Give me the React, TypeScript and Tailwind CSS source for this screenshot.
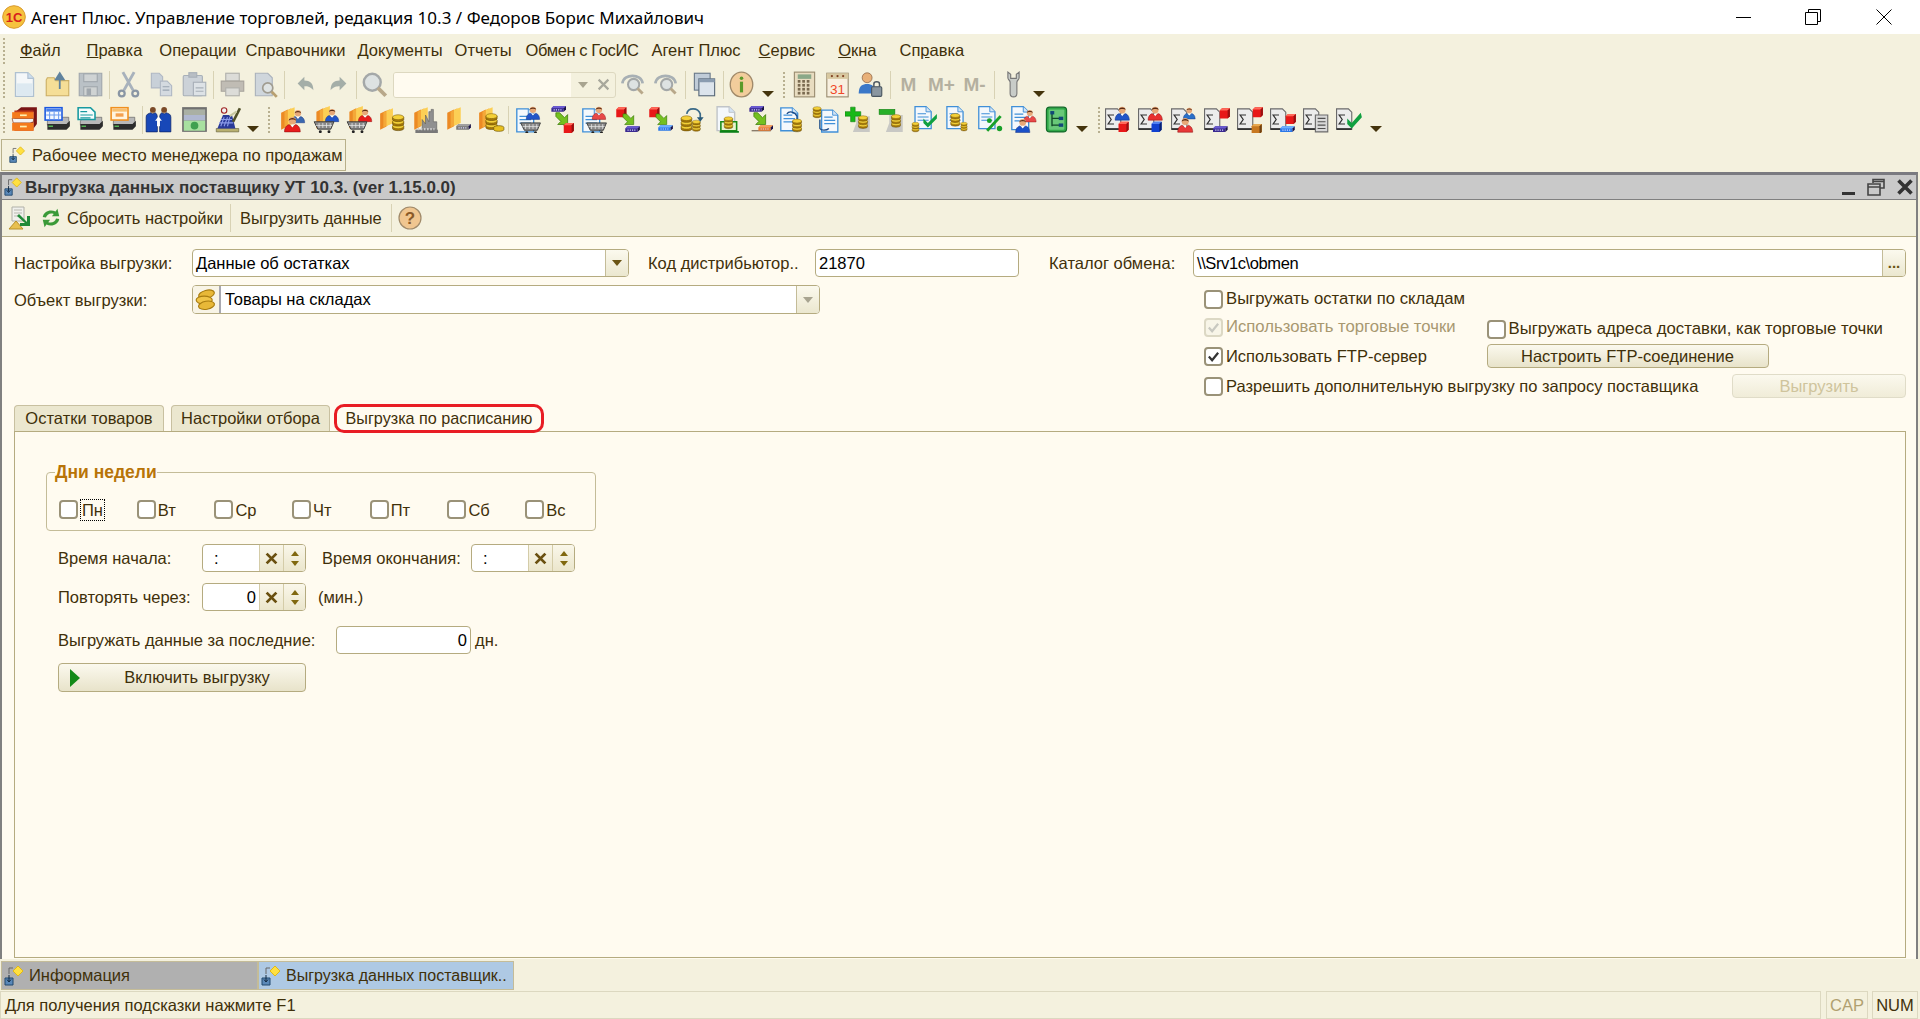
import React from "react";

type P = { x?: number; y?: number; s?: number };
const T = ({ x = 0, y = 0, s = 1, children }: P & { children: React.ReactNode }) => (
  <g transform={`translate(${x} ${y}) scale(${s})`}>{children}</g>
);

const Person = ({ x, y, s, c = "#2255c8", d = "#122f80" }: P & { c?: string; d?: string }) => (
  <T x={x} y={y} s={s}>
    <path d="M0 14 C0 9.5 2.5 8 4 7.5 L7 9.5 L10 7.5 C11.5 8 14 9.5 14 14 Z" fill={c} stroke={d} strokeWidth="0.5" />
    <path d="M5.5 8 L7 10 L8.5 8 Z" fill="#fff" />
    <circle cx="7" cy="4" r="3.3" fill="#e8a878" />
    <path d="M3.7 4 C3.7 0.8 10.3 0.8 10.3 4 C9 2.6 5 2.6 3.7 4 Z" fill="#5a2c14" />
  </T>
);
const Coins = ({ x, y, s }: P) => (
  <T x={x} y={y} s={s}>
    {[9, 5, 1].map((v) => (
      <g key={v}>
        <path d={`M0 ${v + 2} V${v + 4} C0 ${v + 6.5} 10 ${v + 6.5} 10 ${v + 4} V${v + 2} Z`} fill="#a87a08" stroke="#5a4204" strokeWidth="0.5" />
        <ellipse cx="5" cy={v + 2} rx="5" ry="2.2" fill="#f4d038" stroke="#7a5a08" strokeWidth="0.5" />
      </g>
    ))}
  </T>
);
const Stack = ({ x, y, s }: P) => (
  <T x={x} y={y} s={s}>
    <path d="M0 5 L6 2 V17 L0 20 Z" fill="#ec8a24" />
    <path d="M3 4 L9 1 V15 L3 18 Z" fill="#f4a838" />
    <path d="M6 2.5 L12 0 V14 L6 16.5 Z" fill="#fccf55" />
  </T>
);
const Cart = ({ x, y, s }: P) => (
  <T x={x} y={y} s={s}>
    <path d="M0 0 H16 L13.5 6 H3 Z" fill="#8a8a8a" stroke="#333" strokeWidth="0.7" />
    <path d="M4 1 V5 M7 1 V5 M10 1 V5 M13 1 V5 M1.5 3 H14.5" stroke="#e8e8e8" strokeWidth="0.6" />
    <circle cx="5" cy="8" r="1.2" fill="#222" />
    <circle cx="12" cy="8" r="1.2" fill="#222" />
  </T>
);
const Doc = ({ x, y, s, c = "#3f8fd8", lines = true }: P & { c?: string; lines?: boolean }) => (
  <T x={x} y={y} s={s}>
    <path d="M0.5 0.5 H9 L13 4.5 V17.5 H0.5 Z" fill="#f4f8fc" stroke={c} strokeWidth="1" />
    <path d="M9 0.5 V4.5 H13" fill="#d4e4f4" stroke={c} strokeWidth="0.7" />
    {lines && <path d="M2.5 6 H9 M2.5 8.5 H11 M2.5 11 H11" stroke={c} strokeWidth="0.9" />}
  </T>
);
const Cube = ({ x, y, s, c = "#e81818", l = "#ff6a5a", d = "#981010" }: P & { c?: string; l?: string; d?: string }) => (
  <T x={x} y={y} s={s}>
    <path d="M0 2 L2 0 H9 V7 L7 9 H0 Z" fill={c} />
    <path d="M0 2 L2 0 H9 L7 2 Z" fill={l} />
    <path d="M7 2 L9 0 V7 L7 9 Z" fill={d} />
  </T>
);
const Bar = ({ x, y, s, c = "#3a2a90", l = "#6a5ad0" }: P & { c?: string; l?: string }) => (
  <T x={x} y={y} s={s}>
    <path d="M0 2 L2 0 H13 L11 2 V5 H0 Z" fill={c} />
    <path d="M0 2 L2 0 H13 L11 2 Z" fill={l} />
    <path d="M11 2 L13 0 V3 L11 5 Z" fill="#181048" />
    <path d="M2 3.4 H9" stroke="#d8d8ff" strokeWidth="1" strokeDasharray="1 1" />
  </T>
);
const GreenArrow = ({ x, y, s }: P) => (
  <T x={x} y={y} s={s}>
    <path d="M0 0 H3 L7 4 L9.5 1.5 V9.5 H1.5 L4 7 L0 3 Z" fill="#74c020" stroke="#3a7a08" strokeWidth="0.6" />
  </T>
);
const Sigma = ({ x = 0, y = 0 }: P) => (
  <T x={x} y={y}>
    <path d="M0.5 2.5 H11 L14 5.5 V20.5 H0.5 Z" fill="#ececec" stroke="#6a6a6a" strokeWidth="1" />
    <path d="M8 8 H2.8 L5.5 12 L2.8 16 H8" fill="none" stroke="#303030" strokeWidth="1.1" />
    <path d="M0.5 20.5 H14" stroke="#2a2a2a" strokeWidth="1.5" />
  </T>
);
const Printer = ({ children }: { children?: React.ReactNode }) => (
  <>
    <path d="M3 13 L7 10 H22 V14 L20 17 H3 Z" fill="#b8b8b8" stroke="#505050" strokeWidth="0.5" />
    <path d="M3 16 H20 L23 13 V18 L20 21 H3 Z" fill="#2c2c2c" />
    <path d="M4 18 H8" stroke="#58c058" strokeWidth="1.2" />
    {children}
  </>
);

const I = ({ children }: { children: React.ReactNode }) => (
  <svg viewBox="0 0 24 24" className="h-[27px] w-[27px] shrink-0">{children}</svg>
);

const icons: Record<string, React.ReactNode> = {
  newDoc: <g><path d="M4 1.5 H15 L20 6.5 V22.5 H4 Z" fill="#f4f8fc" stroke="#a8bcd0" strokeWidth="1.2" /><path d="M15 1.5 V6.5 H20" fill="#c8dcf0" stroke="#a8bcd0" /><rect x="5" y="11" width="14" height="11" fill="#dbe9f4" /></g>,
  open: <g><path d="M2 8 L3 6 H9 L10.5 8.5 H22 V22 H2 Z" fill="#f6dd90" stroke="#c8a858" /><path d="M14 16 V5 M10.5 7.5 L14 2 L17.5 7.5 Z" fill="#507898" stroke="#507898" strokeWidth="1.6" /></g>,
  save: <g fill="#b4bcc4" stroke="#98a0a8"><path d="M2 2 H22 V22 H2 Z" /><rect x="6" y="2.5" width="12" height="7" fill="#cbd0d4" /><rect x="6" y="14" width="12" height="8" fill="#ccd0d2" /><rect x="9" y="16" width="3" height="5" fill="#98a0a8" /></g>,
  cut: <g fill="none" stroke="#a8b2bc" strokeWidth="2.6"><path d="M7 1 L16 17 M17 1 L8 17" /><circle cx="6" cy="20" r="2.6" strokeWidth="2" stroke="#8a96a4" /><circle cx="18" cy="20" r="2.6" strokeWidth="2" stroke="#8a96a4" /></g>,
  copy: <g fill="#c8d0d8" stroke="#b0b8c4"><path d="M3 2 H10 L13 5 V15 H3 Z" /><path d="M11 9 H17 L21 13 V22 H11 Z" fill="#d4dae0" /><path d="M13 14 H19 M13 17 H19" stroke="#98a4b0" /></g>,
  paste: <g fill="#ccd2d8" stroke="#a8b0b8"><rect x="2" y="4" width="17" height="18" rx="1" /><rect x="7" y="1.5" width="7" height="4" fill="#b8bec4" /><rect x="11" y="10" width="11" height="12" fill="#dde2e6" /><path d="M13 15 H20 M13 18 H20" /></g>,
  print: <g><rect x="6" y="2" width="12" height="7" fill="#dcdcd8" stroke="#b0b0ac" /><path d="M2 9 H22 V18 H2 Z" fill="#c0bcb4" stroke="#a8a49c" /><rect x="6" y="15" width="12" height="7" fill="#dcdcd8" stroke="#b0b0ac" /></g>,
  preview: <g><path d="M3 2 H14 L18 6 V22 H3 Z" fill="#cfd6dc" stroke="#aab2bc" /><circle cx="14" cy="15" r="4.5" fill="#dfe4e4" stroke="#a09c90" strokeWidth="1.5" /><path d="M17.5 18.5 L22 23" stroke="#b8a070" strokeWidth="2.5" /></g>,
  undo: <path d="M5 11 L11 5 V8.5 C16 8.5 19 11 19 17 C16.5 14 14 13.5 11 13.5 V17 Z" fill="#a4aea8" />,
  redo: <path d="M19 11 L13 5 V8.5 C8 8.5 5 11 5 17 C7.5 14 10 13.5 13 13.5 V17 Z" fill="#a4aea8" />,
  find: <g><circle cx="10" cy="10" r="7.5" fill="#dde2e2" stroke="#a4a8a8" strokeWidth="2.2" /><path d="M15 15 L22 22" stroke="#b8a88a" strokeWidth="3.4" /></g>,
  findPrev: <g><path d="M3 11 C4 2 20 2 21 11" fill="none" stroke="#a8b0b4" strokeWidth="2.4" /><circle cx="13" cy="12" r="5" fill="#dde2e2" stroke="#a4a8a8" strokeWidth="1.8" /><path d="M16.5 15.5 L21 20" stroke="#b8a88a" strokeWidth="2.6" /></g>,
  windows: <g><rect x="3" y="2" width="14" height="15" fill="#c0ccd8" stroke="#6a7a8a" /><rect x="7" y="7" width="14" height="15" fill="#dce4ec" stroke="#5a6a7a" /><rect x="7" y="7" width="14" height="3" fill="#8a9cb0" /></g>,
  info: <g><ellipse cx="12" cy="12" rx="10" ry="11" fill="#f2cd9c" stroke="#a08a6a" strokeWidth="1.2" /><circle cx="12" cy="6.5" r="1.6" fill="#5a9a28" /><rect x="10.6" y="9.5" width="2.8" height="9.5" fill="#5a9a28" /></g>,
  calc: <g><rect x="3" y="1" width="18" height="22" fill="#e8dcc0" stroke="#9a8c70" /><rect x="6" y="3" width="12" height="4" fill="#8aa888" />{[9, 12.5, 16, 19.5].flatMap((y) => [7, 11, 15].map((x) => <rect key={`${x}${y}`} x={x - 1} y={y - 1} width="2.4" height="2.4" fill="#7a6a50" />))}</g>,
  calendar: <g><rect x="2.5" y="2" width="19" height="21" fill="#f8f0e0" stroke="#9a8c70" /><rect x="2.5" y="2" width="19" height="5" fill="#d8c8a0" /><circle cx="7" cy="4.5" r="1" fill="#804020" /><circle cx="12" cy="4.5" r="1" fill="#804020" /><circle cx="17" cy="4.5" r="1" fill="#804020" /><text x="12" y="20" textAnchor="middle" fontSize="12" fontFamily="Liberation Sans" fill="#f04828">31</text></g>,
  userLock: <g><circle cx="9" cy="6" r="4.4" fill="#e8b078" stroke="#80583a" strokeWidth="0.6" /><path d="M1.5 20 C1.5 13 5 11.5 9 11.5 C13 11.5 16 13 16 20 Z" fill="#3a78c8" /><rect x="13" y="14" width="9" height="8.5" rx="1" fill="#8a96a0" stroke="#4a5660" /><path d="M15 14 V11.5 C15 9 20 9 20 11.5 V14" fill="none" stroke="#4a5660" strokeWidth="1.3" /></g>,
  wrench: <g fill="#c8ccc8" stroke="#777"><path d="M7 1 V6 C7 8 9 8 9 10 V20 C9 24 15 24 15 20 V10 C15 8 17 8 17 6 V1 L14.5 3 V6.5 H9.5 V3 Z" /></g>,
  cabinet: <g><path d="M4 5 L9 1 H23 V16 L20 20 V5 Z" fill="#7a1414" /><rect x="3" y="4" width="17" height="18" fill="#c03a1a" /><path d="M1 11 H20 V14 L17 15 H2 Z" fill="#f4f4f4" stroke="#803010" strokeWidth="0.6" /><rect x="1" y="5.5" width="19" height="5.5" fill="#f47a1c" /><rect x="1" y="15" width="19" height="7" fill="#f47a1c" /><rect x="8" y="7.5" width="6" height="1.5" fill="#fff0b0" /><rect x="8" y="17.5" width="6" height="1.5" fill="#fff0b0" /></g>,
  printerTable: <Printer><rect x="1" y="1.5" width="15" height="11" fill="#f4f8ff" stroke="#1a58e0" strokeWidth="1.4" /><rect x="2" y="2.5" width="13" height="2.5" fill="#4a80e8" /><path d="M5 5 V12 M9 5 V12 M13 5 V12 M2 8 H15" stroke="#6a9af0" strokeWidth="0.9" /></Printer>,
  printerDoc: <Printer><path d="M1 1.5 H12 L16 5.5 V12 H1 Z" fill="#f4fcfc" stroke="#189aa0" strokeWidth="1.4" /><path d="M3 5 H9 M3 8 H14 M3 10.5 H12" stroke="#189aa0" strokeWidth="1" /></Printer>,
  printerOrange: <Printer><rect x="1" y="1.5" width="15" height="11" fill="#fff4e0" stroke="#f09020" strokeWidth="1.4" /><rect x="2" y="2.5" width="13" height="2.5" fill="#f8c070" /><rect x="5" y="6.5" width="7" height="3" fill="#f4a050" /></Printer>,
  people: <g><path d="M1 23 V10 C1 7 3 7 5 6 L7 7 L9 6 C11 7 11 9 11 12 V23 Z" fill="#1848b8" stroke="#0a2060" strokeWidth="0.6" /><path d="M13 23 V12 C13 9 13 7 15 6 L17 7 L19 6 C21 7 23 7 23 10 V23 Z" fill="#1848b8" stroke="#0a2060" strokeWidth="0.6" /><circle cx="7" cy="3.5" r="2.6" fill="#7a4a28" /><circle cx="17" cy="3.5" r="2.6" fill="#7a4a28" /><path d="M9 13 L12 9 L15 13 Z" fill="#fff" /><rect x="10.7" y="12" width="2.6" height="6" fill="#fff" /></g>,
  money: <g><rect x="1" y="1" width="22" height="22" fill="#707070" /><rect x="2.5" y="3" width="19" height="5" fill="#aab0a4" /><rect x="2.5" y="8" width="19" height="5" fill="#b0b8d0" /><rect x="2.5" y="13" width="19" height="9" fill="#a8e0a0" /><circle cx="12" cy="17.5" r="3.4" fill="#40a050" /></g>,
  register: <g><path d="M2 20 H22 V23 H2 Z" fill="#b8b070" stroke="#5a5430" strokeWidth="0.5" /><path d="M3 20 L8 8 H16 L19 20 Z" fill="#2a3a98" /><path d="M6 18 L9 10 M9 18 L12 10 M12 18 L14 10 M4.5 15 H17 M6 12 H16" stroke="#8a9ae8" strokeWidth="1" /><circle cx="9" cy="4" r="2.4" fill="#f4f4f4" stroke="#a02828" /><path d="M17 14 L23 2" stroke="#505028" strokeWidth="2.4" /><path d="M14 9 L20 5" stroke="#c8c8a0" strokeWidth="2" /></g>,
  gPeople: <g><Stack x={1} y={1} /><Person x={10} y={3} s={0.85} c="#3a68b0" /><Person x={4} y={9} s={1} c="#e81c1c" d="#901010" /></g>,
  gCartBlue: <g><Stack x={3} y={0} /><Person x={11} y={2} s={0.85} /><Cart x={1} y={14} s={1.1} /></g>,
  gCartRed: <g><Stack x={3} y={0} /><Person x={11} y={2} s={0.85} c="#e81c1c" d="#901010" /><Cart x={1} y={14} s={1.1} /></g>,
  gCoins: <g><Stack x={1} y={2} s={0.95} /><Coins x={12} y={7} /></g>,
  gFactory: <g><Stack x={2} y={1} /><path d="M9 21 V12 L12 16 V8 L15 14 V5 H17 V3 H19 V14 H22 V21 Z" fill="#909090" stroke="#585858" strokeWidth="0.5" /><path d="M3 21 H23 V24 H3 Z" fill="#787878" /><path d="M5 20.5 H20" stroke="#ccc" strokeWidth="2" strokeDasharray="1.4 1.4" /></g>,
  gBar: <g><Stack x={2} y={1} /><Bar x={10} y={16} c="#787878" l="#a0a0a0" /></g>,
  gCoinsBar: <g><Stack x={1} y={1} /><Coins x={7} y={6} s={1} /><path d="M14 19 C14 17 23 17 23 19 V21 C23 23 14 23 14 21 Z" fill="#e8c020" stroke="#6a5208" strokeWidth="0.6" /></g>,
  dPerson: <g><Doc x={1} y={2} s={1.2} /><Person x={10} y={0} s={0.85} /><Cart x={5} y={15} s={1.1} /></g>,
  barCube: <g><Bar x={3} y={0} /><GreenArrow x={7} y={6} s={1.1} /><Cube x={14} y={15} /></g>,
  dPersonRed: <g><Doc x={1} y={2} s={1.2} /><Person x={10} y={0} s={0.85} c="#e84848" d="#901010" /><Cart x={5} y={15} s={1.1} /></g>,
  cubeBar: <g><Cube x={2} y={1} /><GreenArrow x={8} y={7} s={1} /><Bar x={10} y={18} /></g>,
  cubeBarBlue: <g><Cube x={2} y={1} /><GreenArrow x={8} y={7} s={1} /><Bar x={10} y={17} c="#2a78e8" l="#70b0ff" /></g>,
  coinsCycle: <g><Coins x={1} y={8} s={0.95} /><Coins x={11} y={12} s={0.7} /><path d="M6 7 C7 1 16 1 18 7 V12" fill="none" stroke="#3a6a88" strokeWidth="1.5" /><path d="M15 10 L18 14 L21 10 Z" fill="#2a5a78" /></g>,
  greenDoc: <g><Doc x={3} y={0} s={1.25} c="#c0c4c8" lines={false} /><path d="M7 22 V14 H21 V22 Z" fill="#e8f4d0" stroke="#1a8a18" strokeWidth="1.4" /><Coins x={10} y={9} s={0.75} /><path d="M6 23 H23" stroke="#0a8018" strokeWidth="1.6" /></g>,
  barArrowOrange: <g><Bar x={3} y={0} /><GreenArrow x={7} y={6} s={1.1} /><path d="M5 22 H22" stroke="#706050" strokeWidth="1" /><Bar x={11} y={17} c="#e87830" l="#f4a060" /></g>,
  docCoin: <g><Doc x={1} y={1} s={1.2} /><path d="M7 7 C9 4 14 5 16 9 V14" fill="none" stroke="#1a4a88" strokeWidth="1.2" /><Coins x={12} y={11} s={0.8} /></g>,
  coinDoc: <g><Doc x={8} y={3} s={1.15} /><Coins x={1} y={0} s={0.7} /><path d="M7 12 V20 C8 22 13 22 15 20" fill="none" stroke="#1a4a88" strokeWidth="1.2" /></g>,
  plusCoin: <g><path d="M10 9 H22 V23 H7 L10 15 Z" fill="#c8c8c4" /><path d="M5 1 H9 V5 H14 V9 H9 V14 H5 V9 H0 V5 H5 Z" fill="#18b818" stroke="#0a7a0a" strokeWidth="0.5" /><Coins x={12} y={8} s={0.8} /></g>,
  minusCoin: <g><path d="M10 8 H22 V23 H7 L10 15 Z" fill="#c8c8c4" /><rect x="1" y="3" width="14" height="4.5" fill="#28b028" stroke="#0a7a0a" strokeWidth="0.5" /><Coins x={12} y={7} s={0.8} /></g>,
  docCheck: <g><Doc x={3} y={0} s={1.15} /><Coins x={1} y={14} s={0.6} /><path d="M11 11 L15 15 L23 7 L23 11 L15 19 L11 15 Z" fill="#10a040" /></g>,
  docCoins2: <g><Doc x={2} y={0} s={1.15} /><Coins x={6} y={6} s={0.8} /><Coins x={15} y={14} s={0.55} /></g>,
  docPercent: <g><Doc x={1} y={0} s={1.15} /><path d="M9 22 L21 9" stroke="#18a028" strokeWidth="2.6" /><circle cx="11" cy="13" r="2.2" fill="#18a028" /><circle cx="20" cy="20" r="2.4" fill="#18a028" /></g>,
  docPeople: <g><Doc x={1} y={0} s={1.2} /><Person x={12} y={3} s={0.8} c="#e84848" d="#901010" /><Person x={5} y={11} s={0.9} c="#1a50c8" /></g>,
  tree: <g><rect x="3" y="1" width="18" height="22" rx="3" fill="#30a848" stroke="#106828" /><rect x="5" y="3" width="14" height="18" rx="1" fill="#68c878" /><path d="M8 6 V18 M8 11 H15 M8 17 H15" stroke="#104828" strokeWidth="1.2" /><rect x="6.5" y="4.5" width="3.5" height="3" fill="#104878" /><rect x="14" y="9.5" width="4" height="3" fill="#104878" /><rect x="14" y="15.5" width="4" height="3" fill="#104878" /></g>,
  sBlueRed: <g><Sigma /><Person x={9} y={0} s={0.9} /><Cube x={12} y={14} /></g>,
  sRedBlue: <g><Sigma /><Person x={9} y={0} s={0.9} c="#e83030" d="#901010" /><Cube x={12} y={14} c="#1040d0" l="#5080f0" d="#082070" /></g>,
  sPeople: <g><Sigma /><Person x={11} y={1} s={0.75} c="#2a70c8" /><Person x={6} y={10} s={0.95} c="#e83838" d="#901010" /></g>,
  sCubeBar: <g><Sigma /><Cube x={14} y={2} /><Bar x={8} y={18} /></g>,
  sCubeOrange: <g><Sigma /><Cube x={14} y={1} /><Cube x={13} y={16} c="#c87820" l="#e8a850" d="#704010" /></g>,
  sCubeBlue: <g><Sigma /><Cube x={14} y={7} /><Bar x={9} y={18} c="#2a78e8" l="#70b0ff" /></g>,
  sTable: <g><Sigma /><path d="M11 8 H22 V23 H11 Z" fill="#d8d8d8" stroke="#6a6a6a" /><path d="M13 11 H20 M13 14 H20 M13 17 H20 M13 20 H20" stroke="#505050" /></g>,
  sCheck: <g><Sigma /><path d="M10 11 L14 15 L22 6 L23 10 L14 20 L10 16 Z" fill="#10a040" /></g>,
};

const Arrow = ({ c = "" }: { c?: string }) => (
  <div className={`flex shrink-0 items-end justify-center self-stretch pb-[5px] ${c}`}>
    <div className="h-0 w-0 border-x-[6px] border-t-[6px] border-x-transparent border-t-[#44340c]" />
  </div>
);
const Sep = ({ c = "mx-[2px]" }: { c?: string }) => <div className={`h-[28px] w-px shrink-0 bg-[#d8d2b4] ${c}`} />;
const Grip = ({ c = "" }: { c?: string }) => (
  <div className={`h-[26px] w-[3px] shrink-0 border-l-2 border-dotted border-[#b8b090] ${c}`} />
);
const Tool = ({ n, c = "w-[33px]" }: { n: string; c?: string }) => (
  <div className={`flex shrink-0 justify-center ${c}`}>
    <I>{icons[n]}</I>
  </div>
);
const Memo = ({ t }: { t: string }) => (
  <div className="w-[33px] shrink-0 text-center text-[19px] font-bold text-[#b4b0a0]">{t}</div>
);

const Brown = "text-[#3f300a]";

const Box = ({ checked, disabled }: { checked?: boolean; disabled?: boolean }) => (
  <span
    className={`flex h-[19px] w-[19px] shrink-0 items-center justify-center rounded-[4px] border-2 ${disabled ? "border-[#dcd8c4] bg-[#f8f5e8]" : "border-[#9a9278] bg-white"}`}
  >
    {checked && (
      <svg viewBox="0 0 14 14" className="h-[13px] w-[13px]">
        <path d="M2 7 L5.5 11 L12 3" fill="none" stroke={disabled ? "#c8c8c0" : "#333"} strokeWidth="2.4" />
      </svg>
    )}
  </span>
);

const Check = ({ label, checked, disabled, c = "" }: { label: string; checked?: boolean; disabled?: boolean; c?: string }) => (
  <label className={`flex items-center gap-[3px] ${disabled ? "text-[#a89870]" : Brown} ${c}`}>
    <Box checked={checked} disabled={disabled} />
    <span className="whitespace-nowrap">{label}</span>
  </label>
);

const Ddb = ({ c = "" }: { c?: string }) => (
  <div className={`flex h-full w-[23px] shrink-0 items-center justify-center border-l border-[#c4bc98] bg-gradient-to-b from-[#fbf9ee] to-[#ebe7cf] ${c}`}>
    <div className="h-0 w-0 border-x-[5px] border-t-[6px] border-x-transparent border-t-[#6a5414]" />
  </div>
);

const Spin = () => (
  <>
    <div className="flex h-full w-[24px] shrink-0 items-center justify-center border-l border-[#d4cca8] bg-gradient-to-b from-[#faf7ea] to-[#ebe6cc]">
      <svg viewBox="0 0 12 12" className="h-[13px] w-[13px]">
        <path d="M1.5 1.5 L10.5 10.5 M10.5 1.5 L1.5 10.5" stroke="#6a5010" strokeWidth="2.6" />
      </svg>
    </div>
    <div className="flex h-full w-[22px] shrink-0 flex-col items-center justify-center gap-[5px] border-l border-[#d4cca8] bg-gradient-to-b from-[#faf7ea] to-[#ebe6cc]">
      <div className="h-0 w-0 border-x-[4px] border-b-[5px] border-x-transparent border-b-[#80680f]" />
      <div className="h-0 w-0 border-x-[4px] border-t-[5px] border-x-transparent border-t-[#80680f]" />
    </div>
  </>
);

const SpinField = ({ v, right, c = "" }: { v: string; right?: boolean; c?: string }) => (
  <div className={`flex h-[28px] w-[104px] shrink-0 items-center overflow-hidden rounded-[4px] border border-[#b5ab80] bg-white text-black ${c}`}>
    <div className={`flex-1 ${right ? "pr-[3px] text-right" : "pl-[11px]"}`}>{v}</div>
    <Spin />
  </div>
);

const BtnBase = "flex items-center justify-center rounded-[4px] border bg-gradient-to-b";

const MiniDoc = ({ s = "h-[22px] w-[22px]" }: { s?: string }) => (
  <svg viewBox="0 0 22 22" className={`shrink-0 ${s}`}>
    <path d="M5 9 V3 H9" fill="none" stroke="#666" strokeWidth="1" />
    <path d="M1 13 H9 V20 H1 Z" fill="#5a88b8" stroke="#20486e" />
    <path d="M5 10 V16 M3 14.5 L5 17 L7 14.5" fill="none" stroke="#102840" strokeWidth="1" />
    <path d="M14 1 L19 6 L14 11 L9 6 Z" fill="#ffe040" stroke="#e0b818" />
  </svg>
);

export default function App() {
  return (
    <div className={`flex h-[1019px] w-[1920px] flex-col overflow-hidden bg-[#f4f1de] font-['Liberation_Sans',Arial,sans-serif] text-[16.5px] leading-none ${Brown}`}>
      {/* Title bar */}
      <div className="flex h-[34px] shrink-0 items-center bg-white text-black">
        <svg viewBox="0 0 24 24" className="ml-[2px] h-[24px] w-[24px] shrink-0">
          <circle cx="12" cy="12" r="11.3" fill="#f6c23e" stroke="#d89a30" />
          <text x="12" y="17" textAnchor="middle" fontSize="13" fontWeight="700" fontFamily="Liberation Sans" fill="#d8201c">1С</text>
        </svg>
        <span className="ml-[5px] font-['Noto_Sans',sans-serif] text-[17px] tracking-[0.03px]">Агент Плюс. Управление торговлей, редакция 10.3 / Федоров Борис Михайлович</span>
        <div className="ml-auto flex items-center">
          <svg viewBox="0 0 16 16" className="h-[16px] w-[16px]"><path d="M0 8.5 H15" stroke="#000" /></svg>
          <svg viewBox="0 0 16 16" className="ml-[53px] h-[16px] w-[16px]"><path d="M3.5 3.5 V0.5 H15.5 V12.5 H12.5 M0.5 3.5 H12.5 V15.5 H0.5 Z" fill="none" stroke="#000" /></svg>
          <svg viewBox="0 0 16 16" className="ml-[55px] mr-[28px] h-[16px] w-[16px]"><path d="M0.5 0.5 L15.5 15.5 M15.5 0.5 L0.5 15.5" stroke="#000" /></svg>
        </div>
      </div>

      {/* Menu */}
      <div className="flex h-[33px] shrink-0 items-center">
        <Grip c="ml-[3px]" />
        <span className="ml-[14px]"><u>Ф</u>айл</span>
        <span className="ml-[26px]"><u>П</u>равка</span>
        <span className="ml-[17px]">Операции</span>
        <span className="ml-[9px]">Справочники</span>
        <span className="ml-[12px]">Документы</span>
        <span className="ml-[12px]">Отчеты</span>
        <span className="ml-[14px] tracking-[-0.4px]">Обмен с ГосИС</span>
        <span className="ml-[13px]">Агент Плюс</span>
        <span className="ml-[18px]"><u>С</u>ервис</span>
        <span className="ml-[23px]"><u>О</u>кна</span>
        <span className="ml-[23px]">Сп<u>р</u>авка</span>
      </div>

      {/* Toolbar 1 */}
      <div className="flex h-[35px] shrink-0 items-center">
        <Grip c="ml-[3px] mr-[2px]" />
        <div className="flex shrink-0 opacity-90">
          <Tool n="newDoc" />
          <Tool n="open" />
          <Tool n="save" />
        </div>
        <Sep />
        <Tool n="cut" />
        <Tool n="copy" />
        <Tool n="paste" />
        <Sep />
        <Tool n="print" />
        <Tool n="preview" />
        <Sep />
        <Tool n="undo" c="w-[33px] ml-[2px]" />
        <Tool n="redo" />
        <Sep c="mx-[1px]" />
        <Tool n="find" />
        <div className="ml-[2px] flex h-[26px] w-[223px] shrink-0 items-center overflow-hidden rounded-[3px] border border-[#ddd8c0]">
          <div className="h-full w-[177px] bg-[#fffbf0]" />
          <div className="flex w-[23px] justify-center"><div className="h-0 w-0 border-x-[5px] border-t-[6px] border-x-transparent border-t-[#a8a490]" /></div>
          <svg viewBox="0 0 12 12" className="ml-[3px] h-[13px] w-[13px]"><path d="M1.5 1.5 L10.5 10.5 M10.5 1.5 L1.5 10.5" stroke="#a8a89c" strokeWidth="2" /></svg>
        </div>
        <Tool n="findPrev" />
        <Tool n="findPrev" />
        <Sep c="ml-[3px] mr-[2px]" />
        <Tool n="windows" />
        <Sep c="ml-[2px] mr-[1px]" />
        <Tool n="info" />
        <Arrow c="w-[20px]" />
        <Grip c="ml-[5px] mr-[2px]" />
        <Tool n="calc" />
        <Tool n="calendar" />
        <Tool n="userLock" />
        <Sep c="ml-[3px] mr-[1px]" />
        <Memo t="M" />
        <Memo t="M+" />
        <Memo t="M-" />
        <Sep c="ml-[3px] mr-[2px]" />
        <Tool n="wrench" />
        <Arrow c="w-[17px]" />
      </div>

      {/* Toolbar 2 */}
      <div className="flex h-[35px] shrink-0 items-center">
        <Grip c="ml-[3px] mr-[2px]" />
        <Tool n="cabinet" />
        <Tool n="printerTable" />
        <Tool n="printerDoc" />
        <Tool n="printerOrange" />
        <Sep />
        <Tool n="people" c="w-[27px]" />
        <Tool n="money" c="w-[44px]" />
        <Tool n="register" c="w-[23px]" />
        <Arrow c="w-[27px]" />
        <Grip c="mx-[2px]" />
        <div className="ml-[4px] flex shrink-0">
          {["gPeople", "gCartBlue", "gCartRed", "gCoins", "gFactory", "gBar", "gCoinsBar"].map((n) => (
            <Tool key={n} n={n} />
          ))}
        </div>
        <Sep c="ml-0 mr-[3px]" />
        {["dPerson", "barCube", "dPersonRed", "cubeBar", "cubeBarBlue", "coinsCycle", "greenDoc", "barArrowOrange", "docCoin", "coinDoc", "plusCoin", "minusCoin", "docCheck", "docCoins2", "docPercent", "docPeople", "tree"].map((n) => (
          <Tool key={n} n={n} />
        ))}
        <Arrow c="w-[17px]" />
        <Grip c="ml-[8px] mr-[1px]" />
        {["sBlueRed", "sRedBlue", "sPeople", "sCubeBar", "sCubeOrange", "sCubeBlue", "sTable", "sCheck"].map((n) => (
          <Tool key={n} n={n} />
        ))}
        <Arrow c="w-[19px]" />
      </div>

      {/* Panel button */}
      <div className="flex h-[35px] shrink-0 pl-[1px] pt-[2px]">
        <div className="flex h-[32px] w-[345px] items-center gap-[5px] border border-[#b8b08a] pl-[7px]">
          <MiniDoc s="h-[18px] w-[18px]" />
          <span className="whitespace-nowrap">Рабочее место менеджера по продажам</span>
        </div>
      </div>

      {/* MDI window */}
      <div className="mr-[2px] flex min-h-0 flex-1 flex-col border-x-2 border-t-[3px] border-x-[#808080] border-t-[#7a7a80] bg-[#fffbf0]">
        <div className="flex h-[25px] shrink-0 items-center border-b border-[#808080] bg-[#c9c9c9] text-[#333]">
          <MiniDoc s="ml-[2px] h-[20px] w-[20px]" />
          <span className="ml-[1px] text-[17px] font-bold">Выгрузка данных поставщику УТ 10.3. (ver 1.15.0.0)</span>
          <div className="ml-auto flex items-center">
            <div className="mt-[13px] h-[3px] w-[13px] bg-[#333]" />
            <svg viewBox="0 0 18 18" className="ml-[12px] h-[18px] w-[18px]"><path d="M6 5 V1.5 H17 V10 H13 M1 6 H13 V17 H1 Z M1 9 H13 M6 3.5 H17" fill="none" stroke="#444" strokeWidth="1.6" /></svg>
            <svg viewBox="0 0 16 16" className="ml-[12px] mr-[3px] h-[16px] w-[16px]"><path d="M1.5 1.5 L14.5 14.5 M14.5 1.5 L1.5 14.5" stroke="#333" strokeWidth="3.6" /></svg>
          </div>
        </div>
        <div className="flex h-[37px] shrink-0 items-center border-b border-[#b7ae85] bg-[#f4f1de]">
          <svg viewBox="0 0 24 24" className="ml-[5px] h-[24px] w-[24px] shrink-0">
            <path d="M5 1 H17 V15 H5 Z" fill="#f0f0ec" stroke="#b0b0a8" />
            <path d="M7 4 H15 M7 7 H15 M7 10 H12" stroke="#b8b8b0" />
            <path d="M2 23 L9 15 L16 23 Z" fill="#e8c050" stroke="#b89028" />
            <path d="M12 8 L20 16 V10 H23 V20 H13 V17 H18 L10 10 Z" fill="#208a38" />
          </svg>
          <svg viewBox="0 0 24 24" className="ml-[9px] h-[22px] w-[22px] shrink-0">
            <path d="M3 11 C4 5 11 2 17 5 L19 2 L21 10 L13 10 L15 7.5 C11 6 7.5 8 6.5 11.5 Z" fill="#3a9a38" />
            <path d="M21 13 C20 19 13 22 7 19 L5 22 L3 14 L11 14 L9 16.5 C13 18 16.5 16 17.5 12.5 Z" fill="#3a9a38" />
          </svg>
          <span className="ml-[5px]">Сбросить настройки</span>
          <Sep c="ml-[7px] mr-[9px]" />
          <span>Выгрузить данные</span>
          <Sep c="ml-[9px] mr-[6px]" />
          <svg viewBox="0 0 24 24" className="h-[24px] w-[24px] shrink-0">
            <circle cx="12" cy="12" r="11" fill="#f0c690" stroke="#a08a6a" strokeWidth="1.2" />
            <text x="12" y="18" textAnchor="middle" fontSize="17" fontWeight="700" fontFamily="Liberation Sans" fill="#8a5a28">?</text>
          </svg>
        </div>

        {/* Form */}
        <div className="flex min-h-0 flex-1 flex-col pl-[12px] pr-[10px]">
          <div className="mt-[12px] flex h-[28px] shrink-0 items-center">
            <span className="w-[178px] shrink-0">Настройка выгрузки:</span>
            <div className="flex h-full w-[437px] shrink-0 items-center overflow-hidden rounded-[4px] border border-[#b5ab80] bg-white pl-[3px] text-black">
              <span className="flex-1">Данные об остатках</span>
              <Ddb />
            </div>
            <span className="ml-[19px] w-[167px] shrink-0">Код дистрибьютор..</span>
            <div className="flex h-full w-[204px] shrink-0 items-center rounded-[4px] border border-[#b5ab80] bg-white pl-[3px] text-black">21870</div>
            <span className="ml-[30px] w-[144px] shrink-0">Каталог обмена:</span>
            <div className="flex h-full min-w-0 flex-1 items-center overflow-hidden rounded-[4px] border border-[#b5ab80] bg-white pl-[3px] text-black">
              <span className="flex-1 tracking-[-0.4px]">\\Srv1c\obmen</span>
              <div className="flex h-full w-[23px] items-end justify-center border-l border-[#c4bc98] bg-gradient-to-b from-[#fbf9ee] to-[#ebe7cf] pb-[6px] text-[15px] font-bold text-[#6a5414]">...</div>
            </div>
          </div>

          <div className="mt-[8px] flex shrink-0">
            <span className="mt-[7px] w-[178px] shrink-0">Объект выгрузки:</span>
            <div className="flex h-[29px] w-[628px] shrink-0 items-center overflow-hidden rounded-[4px] border border-[#b5ab80] bg-white text-black">
              <div className="flex h-full w-[28px] shrink-0 items-center justify-center border-r-2 border-[#a8a8b0] bg-[#f8f4e6]">
                <svg viewBox="0 0 20 20" className="h-[23px] w-[23px]">
                  <ellipse cx="10" cy="5.5" rx="7" ry="3.5" fill="#e8b838" stroke="#a87c10" transform="rotate(-15 10 5.5)" />
                  <ellipse cx="8" cy="10.5" rx="7" ry="3.5" fill="#f0c448" stroke="#a87c10" />
                  <ellipse cx="10" cy="15" rx="7" ry="3.5" fill="#e8b838" stroke="#a87c10" transform="rotate(-10 10 15)" />
                </svg>
              </div>
              <span className="flex-1 pl-[4px]">Товары на складах</span>
              <div className="flex h-full w-[23px] shrink-0 items-center justify-center border-l border-[#c4bc98] bg-gradient-to-b from-[#fbf9ee] to-[#ebe7cf]">
                <div className="h-0 w-0 border-x-[5px] border-t-[6px] border-x-transparent border-t-[#a8a490]" />
              </div>
            </div>
            <div className="-mt-[1px] ml-[384px] flex flex-col">
              <div className="flex h-[30px] items-center">
                <Check label="Выгружать остатки по складам" c="text-[16.7px]" />
              </div>
              <div className="flex h-[27px] items-center">
                <div className="w-[282.5px] shrink-0"><Check label="Использовать торговые точки" checked disabled c="text-[16.7px]" /></div>
                <div className="mt-[3px]"><Check label="Выгружать адреса доставки, как торговые точки" c="text-[16.75px]" /></div>
              </div>
              <div className="flex h-[30px] items-center">
                <div className="w-[282.5px] shrink-0"><Check label="Использовать FTP-сервер" checked /></div>
                <div className={`${BtnBase} h-[24px] w-[282px] border-[#b5ab80] from-[#fbf9ee] to-[#e8e3ca]`}>Настроить FTP-соединение</div>
              </div>
              <div className="flex h-[30px] w-[702px] items-center">
                <Check label="Разрешить дополнительную выгрузку по запросу поставщика" />
                <div className={`${BtnBase} ml-auto h-[24px] w-[174px] border-[#e0dcc8] from-[#fbf9ee] to-[#f0ecd8] text-[#cfc49c]`}>Выгрузить</div>
              </div>
            </div>
          </div>

          {/* Tabs */}
          <div className="mt-[2px] flex h-[28px] shrink-0 items-end">
            <div className="flex h-[26px] w-[150px] items-center justify-center rounded-t-[4px] border border-b-0 border-[#c8c0a0] bg-[#ebe7cf]">Остатки товаров</div>
            <div className="ml-[7px] flex h-[26px] w-[159px] items-center justify-center rounded-t-[4px] border border-b-0 border-[#c8c0a0] bg-[#ebe7cf]">Настройки отбора</div>
            <div className="relative z-10 ml-[4px] -mb-[2px] flex h-[29px] w-[210px] items-center justify-center rounded-[10px] border-[3px] border-[#e81c24] bg-[#fffbf0] text-[16.2px]">Выгрузка по расписанию</div>
          </div>

          {/* Tab panel */}
          <div className="mb-[1px] flex min-h-0 flex-1 flex-col items-start border border-[#b5ab80] pl-[31px]">
            <fieldset className="mt-[32px] h-[67px] w-[550px] shrink-0 rounded-[4px] border border-[#c4bc98] px-[12px]">
              <legend className="-ml-[4px] text-[17.5px] font-bold text-[#b87408]">Дни недели</legend>
              <div className="mt-[17px] flex">
                {["Пн", "Вт", "Ср", "Чт", "Пт", "Сб", "Вс"].map((d, i) => (
                  <div key={d} className={`flex shrink-0 items-center gap-[2px] ${i === 6 ? "w-[50px]" : "w-[77.7px]"}`}>
                    <Box />
                    <span className={i === 0 ? "border border-dotted border-black px-[1px] py-[2px]" : ""}>{d}</span>
                  </div>
                ))}
              </div>
            </fieldset>

            <div className="mt-[13px] ml-[12px] flex h-[28px] shrink-0 items-center">
              <span className="w-[144px] shrink-0">Время начала:</span>
              <SpinField v=":" />
              <span className="ml-[16px] w-[149px] shrink-0">Время окончания:</span>
              <SpinField v=":" />
            </div>
            <div className="mt-[11px] ml-[12px] flex h-[28px] shrink-0 items-center">
              <span className="w-[144px] shrink-0">Повторять через:</span>
              <SpinField v="0" right />
              <span className="ml-[12px]">(мин.)</span>
            </div>
            <div className="mt-[15px] ml-[12px] flex h-[28px] shrink-0 items-center">
              <span className="w-[278px] shrink-0">Выгружать данные за последние:</span>
              <div className="flex h-full w-[135px] shrink-0 items-center justify-end rounded-[4px] border border-[#b5ab80] bg-white pr-[3px] text-black">0</div>
              <span className="ml-[4px]">дн.</span>
            </div>
            <div className={`${BtnBase} relative mt-[9px] ml-[12px] h-[29px] w-[248px] shrink-0 border-[#b5ab80] from-[#fbf9ee] to-[#e8e3ca]`}>
              <svg viewBox="0 0 10 18" className="absolute left-[11px] top-[5px] h-[18px] w-[10px]"><path d="M0 0 L10 9 L0 18 Z" fill="#128a18" /></svg>
              <span className="pl-[30px]">Включить выгрузку</span>
            </div>
          </div>
        </div>
      </div>

      {/* Window bar */}
      <div className="mt-[2px] flex h-[29px] shrink-0 pl-[1px]">
        <div className="flex w-[257px] items-center border border-[#c4bc98] bg-[#b0b0b0] pl-[2px]">
          <MiniDoc />
          <span className="ml-[3px]">Информация</span>
        </div>
        <div className="flex w-[256px] items-center border border-[#c4bc98] bg-[#aec9e4] pl-[2px]">
          <MiniDoc />
          <span className="ml-[3px] whitespace-nowrap text-[16px]">Выгрузка данных поставщик..</span>
        </div>
      </div>

      {/* Status bar */}
      <div className="mt-[1px] flex h-[28px] shrink-0">
        <div className="flex w-[1821px] items-center border border-[#dcd8c0] pl-[4px]">Для получения подсказки нажмите F1</div>
        <div className="ml-[5px] flex w-[42px] items-center justify-center border border-[#dcd8c0] text-[#b0a070]">CAP</div>
        <div className="ml-[4px] flex w-[46px] items-center justify-center border border-[#dcd8c0]">NUM</div>
      </div>
    </div>
  );
}
